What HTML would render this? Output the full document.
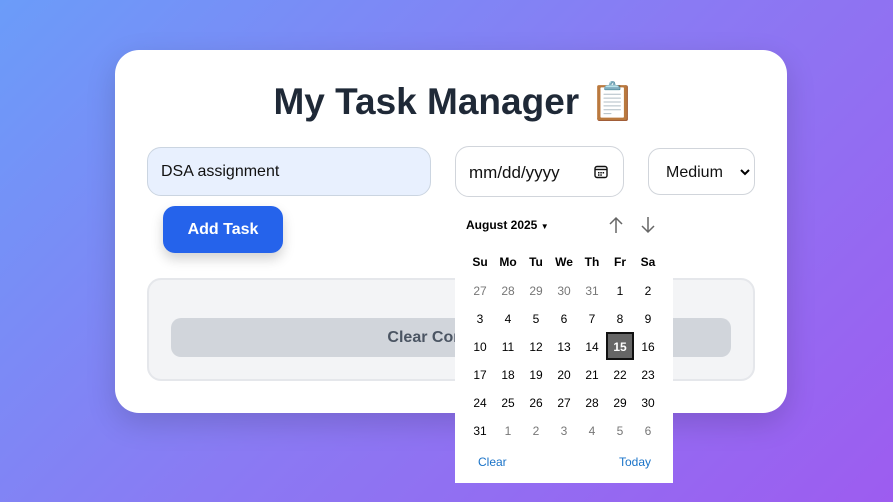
<!DOCTYPE html>
<html><head><style>
*{box-sizing:border-box;margin:0;padding:0}
body{width:893px;height:502px;overflow:hidden;font-family:"Liberation Sans",sans-serif;background:linear-gradient(135deg,#6b9cf9 0%,#8a7af3 50%,#9d5cf0 100%);position:relative}
.card{position:absolute;left:115px;top:50px;width:672px;height:363px;background:#fff;border-radius:24px;box-shadow:0 10px 30px rgba(0,0,0,.15)}
h1{position:absolute;left:8px;width:100%;top:78px;text-align:center;font-size:37px;font-weight:bold;color:#1f2937;line-height:48px}
.a{position:absolute}
.inp{left:147px;top:147px;width:284px;height:49px;background:#e8f0fe;border:1px solid #cbd5e1;border-radius:14px;font-size:16px;color:#111;padding:15px 0 0 13px}
.date{left:455px;top:146px;width:169px;height:51px;border:1px solid #d1d5db;border-radius:14px;font-size:17px;color:#111;padding:16px 0 0 13px;background:#fff}
.sel{left:648px;top:148px;width:107px;height:47px;border:1px solid #d1d5db;border-radius:12px;font-size:16px;color:#111;padding:15px 0 0 17px;background:#fff}
.btn{left:163px;top:206px;width:120px;height:47px;background:#2563eb;border-radius:12px;color:#fff;font-weight:bold;font-size:16px;text-align:center;line-height:47px;box-shadow:0 6px 12px rgba(0,0,0,.18)}
.panel{left:147px;top:278px;width:608px;height:103px;background:#f3f4f6;border:2px solid #e5e7eb;border-radius:14px}
.clr{left:171px;top:318px;width:560px;height:39px;background:#d1d5db;border-radius:10px;color:#4b5563;font-weight:bold;font-size:16px;text-align:center;line-height:39px}
.cal{left:455px;top:198px;width:218px;height:285px;background:#fff}
.d{position:absolute;width:28px;margin-left:-14px;text-align:center;font-size:12px;color:#000;line-height:14px}
.g{color:#777}
</style></head><body>
<div class="card"></div>
<h1>My Task Manager <span style="font-family:'Noto Color Emoji',sans-serif">📋</span></h1>
<div class="a inp">DSA assignment</div>
<div class="a date">mm/dd/yyyy
<svg style="position:absolute;left:138px;top:18px" width="14" height="14" viewBox="0 0 14 14"><rect x="1" y="1.5" width="12" height="11" rx="2" fill="none" stroke="#111" stroke-width="1.4"/><line x1="1" y1="4.5" x2="13" y2="4.5" stroke="#111" stroke-width="1.4"/><rect x="4" y="7" width="1.5" height="1.5" fill="#111"/><rect x="6.3" y="7" width="1.5" height="1.5" fill="#111"/><rect x="8.6" y="7" width="1.5" height="1.5" fill="#111"/><rect x="4" y="9.3" width="1.5" height="1.5" fill="#111"/><rect x="6.3" y="9.3" width="1.5" height="1.5" fill="#111"/></svg></div>
<div class="a sel">Medium<svg style="position:absolute;left:91px;top:20px" width="10" height="7" viewBox="0 0 10 7"><path d="M1 1l4 4 4-4" fill="none" stroke="#000" stroke-width="2"/></svg></div>
<div class="a btn">Add Task</div>
<div class="a panel"></div>
<div class="a clr">Clear Completed</div>
<div class="a cal">
<div class="a" style="left:151px;top:134px;width:28px;height:28px;background:#666;border:2px solid #111"></div>
<div class="a" style="left:11px;top:20px;font-size:12px;font-weight:bold">August 2025 <span style="font-size:8px">▼</span></div>
<svg class="a" style="left:153px;top:18px" width="16" height="18" viewBox="0 0 16 18"><path d="M8 17V2M2 8l6-6 6 6" fill="none" stroke="#666" stroke-width="1.5"/></svg>
<svg class="a" style="left:185px;top:18px" width="16" height="18" viewBox="0 0 16 18"><path d="M8 1v15M2 10l6 6 6-6" fill="none" stroke="#666" stroke-width="1.5"/></svg>
<div id="grid"></div>
<div class="a" style="left:23px;top:257px;font-size:12px;color:#1a73c8">Clear</div>
<div class="a" style="left:164px;top:257px;font-size:12px;color:#1a73c8">Today</div>
</div>
<script>
var g=document.getElementById('grid'),h='',hd=['Su','Mo','Tu','We','Th','Fr','Sa'];
for(var i=0;i<7;i++)h+='<div class="d" style="left:'+(25+28*i)+'px;top:57px;font-weight:bold">'+hd[i]+'</div>';
var days=[[27,28,29,30,31,1,2],[3,4,5,6,7,8,9],[10,11,12,13,14,15,16],[17,18,19,20,21,22,23],[24,25,26,27,28,29,30],[31,1,2,3,4,5,6]];
for(var r=0;r<6;r++)for(var c=0;c<7;c++){var v=days[r][c],gr=(r==0&&c<5)||(r==5&&c>0),st='';
if(r==2&&c==5)st='color:#fff;font-weight:bold;';
h+='<div class="d'+(gr?' g':'')+'" style="'+st+'left:'+(25+28*c)+'px;top:'+(86+28*r)+'px">'+v+'</div>';}
g.innerHTML=h;
</script>
</body></html>
